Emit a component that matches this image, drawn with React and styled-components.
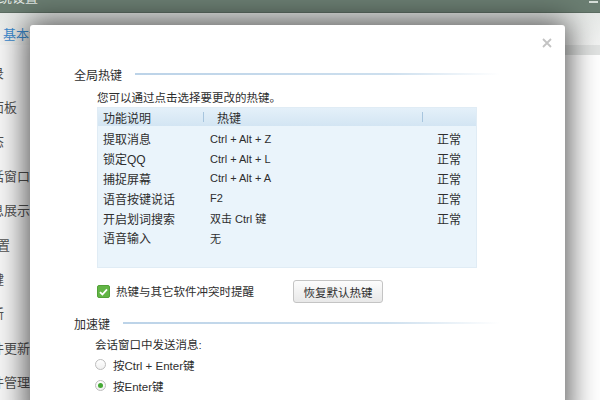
import React from 'react';
import styled, { createGlobalStyle } from 'styled-components';

const FONT = `"Liberation Sans", "Noto Sans CJK SC", sans-serif`;

const GlobalStyle = createGlobalStyle`
  html, body { margin: 0; padding: 0; width: 600px; height: 400px; overflow: hidden; background: #f3f4f3; }
  #root { width: 600px; height: 400px; }
  * { box-sizing: border-box; }
`;

const Screen = styled.div`
  position: relative;
  width: 600px;
  height: 400px;
  overflow: hidden;
  font-family: ${FONT};
  display: flex;
  flex-direction: column;
  background: #f4f5f4;
`;

const TitleBar = styled.div`
  flex: none;
  height: 13px;
  background: #6b7e72;
  border-bottom: 1px solid #5c6d62;
  display: flex;
  justify-content: space-between;
  align-items: flex-start;
  overflow: hidden;
`;

const WindowTitle = styled.span`
  margin-top: -11px;
  margin-left: -14px;
  font-size: 13px;
  line-height: 18px;
  color: #e4ebe6;
  white-space: nowrap;
`;

const MinButton = styled.span`
  width: 9px;
  height: 2px;
  margin: 1px 2px 0 0;
  background: #d6ddd8;
`;

const TabBar = styled.div`
  flex: none;
  height: 32px;
  padding: 12px 0 0 3px;
  background: linear-gradient(#e6e9e7, #f2f3f2);
`;

const Tab = styled.span`
  font-size: 13px;
  line-height: 18px;
  color: #3b8bd0;
`;

const Body = styled.div`
  flex: 1;
  display: flex;
  min-height: 0;
`;

const Sidebar = styled.div`
  flex: none;
  width: 30px;
  overflow: hidden;
  padding-top: 10px;
  background: #f6f6f6;
`;

const SideItem = styled.div`
  height: 34.4px;
  display: flex;
  align-items: center;
  margin-left: ${(p) => p.$offset ?? -22}px;
  font-size: 13px;
  color: #505050;
  white-space: nowrap;
`;

const MainArea = styled.div`
  flex: 1;
  background: #ffffff;
  border-top: 10px solid #e1e3e2;
`;

const Dialog = styled.div`
  position: absolute;
  left: 30px;
  top: 25px;
  width: 535px;
  height: 400px;
  background: #ffffff;
  border-radius: 3px 3px 0 0;
  box-shadow: 0 0 30px 4px rgba(0, 0, 0, 0.66);
`;

const CloseButton = styled.div`
  position: absolute;
  top: 13px;
  right: 13px;
  width: 10px;
  height: 10px;
  display: flex;
`;

const DialogBody = styled.div`
  padding: 40px 65px 0 44px;
  display: flex;
  flex-direction: column;
  color: #2e2e2e;
`;

const SectionHeader = styled.div`
  display: flex;
  align-items: center;
  gap: 13px;
  height: 18px;
  margin-top: ${(p) => p.$top || 0}px;
  font-size: 12px;
  color: #2e2e2e;
`;

const SectionLine = styled.div`
  flex: 1;
  height: 2px;
  margin-top: -1px;
  background: linear-gradient(to right, #bcd3e8, #cddfee 70%, rgba(255, 255, 255, 0));
`;

const SectionBody = styled.div`
  padding-left: ${(p) => p.$indent}px;
  display: flex;
  flex-direction: column;
`;

const Text = styled.div`
  font-size: 11.5px;
  line-height: 18px;
  margin-top: ${(p) => p.$top || 0}px;
  color: #2e2e2e;
  white-space: nowrap;
`;

const Table = styled.div`
  width: 380px;
  height: 161px;
  background: #eaf4fb;
  border: 1px solid #e0ecf5;
  display: flex;
  flex-direction: column;
`;

const COLS = '105px 219px 1fr';

const TableHead = styled.div`
  height: 18px;
  flex: none;
  display: grid;
  grid-template-columns: ${COLS};
  background: linear-gradient(#e4f0f9, #d3e5f3);
  font-size: 12px;
  color: #2e2e2e;
`;

const HeadCell = styled.div`
  display: flex;
  align-items: center;
  padding-left: ${(p) => (p.$divider ? 0 : 5)}px;
  &::before {
    content: '';
    display: ${(p) => (p.$divider ? 'block' : 'none')};
    width: 1px;
    height: 10px;
    margin-right: 13px;
    background: #a7c5de;
  }
`;

const Rows = styled.div`
  padding-top: 3px;
  display: flex;
  flex-direction: column;
`;

const Row = styled.div`
  height: 19.8px;
  display: grid;
  grid-template-columns: ${COLS};
  align-items: center;
  font-size: 12px;
  color: #2e2e2e;
`;

const Cell = styled.div`
  padding-left: ${(p) => p.$pad}px;
  font-size: ${(p) => p.$size || 12}px;
  white-space: nowrap;
`;

const OptionRow = styled.div`
  display: flex;
  align-items: center;
  height: 23px;
  margin-top: 12px;
`;

const CheckGroup = styled.div`
  width: 196px;
  display: flex;
  align-items: center;
  gap: 6px;
`;

const CheckBox = styled.div`
  width: 13px;
  height: 13px;
  border-radius: 2px;
  background: #62b545;
  border: 1px solid #52a238;
  display: flex;
  align-items: center;
  justify-content: center;
`;

const Button = styled.div`
  width: 90px;
  height: 23px;
  border: 1px solid #c4c4c4;
  border-radius: 3px;
  background: linear-gradient(#fcfcfc, #e8e8e8);
  display: flex;
  align-items: center;
  justify-content: center;
  font-size: 11.5px;
  color: #2e2e2e;
`;

const RadioRow = styled.div`
  height: 21px;
  display: flex;
  align-items: center;
  gap: 7px;
  font-size: 11.5px;
  color: #2e2e2e;
`;

const Radio = styled.div`
  width: 11px;
  height: 11px;
  border-radius: 50%;
  border: 1px solid #bdbdbd;
  background: linear-gradient(#ffffff, #f0f0f0);
  display: flex;
  align-items: center;
  justify-content: center;
  &::after {
    content: '';
    display: ${(p) => (p.$checked ? 'block' : 'none')};
    width: 5px;
    height: 5px;
    border-radius: 50%;
    background: #45a935;
  }
`;

const sideItems = [
  { t: '登录' },
  { t: '主面板' },
  { t: '状态' },
  { t: '会话窗口' },
  { t: '消息展示' },
  { t: '安全设置', o: -42 },
  { t: '热键' },
  { t: '更新' },
  { t: '软件更新' },
  { t: '文件管理' },
];

const hotkeys = [
  ['提取消息', 'Ctrl + Alt + Z', '正常'],
  ['锁定QQ', 'Ctrl + Alt + L', '正常'],
  ['捕捉屏幕', 'Ctrl + Alt + A', '正常'],
  ['语音按键说话', 'F2', '正常'],
  ['开启划词搜索', '双击 Ctrl 键', '正常'],
  ['语音输入', '无', ''],
];

export default function App() {
  return (
    <>
      <GlobalStyle />
      <Screen>
        <TitleBar>
          <WindowTitle>系统设置</WindowTitle>
          <MinButton />
        </TitleBar>
        <TabBar>
          <Tab>基本设置</Tab>
        </TabBar>
        <Body>
          <Sidebar>
            {sideItems.map((s) => (
              <SideItem key={s.t} $offset={s.o}>{s.t}</SideItem>
            ))}
          </Sidebar>
          <MainArea />
        </Body>

        <Dialog>
          <CloseButton>
            <svg width="10" height="10" viewBox="0 0 10 10">
              <path d="M1 1 L9 9 M9 1 L1 9" stroke="#c3c3c3" strokeWidth="1.8" />
            </svg>
          </CloseButton>
          <DialogBody>
            <SectionHeader>
              全局热键
              <SectionLine />
            </SectionHeader>
            <SectionBody $indent={23}>
              <Text $top={6}>您可以通过点击选择要更改的热键。</Text>
              <Table>
                <TableHead>
                  <HeadCell>功能说明</HeadCell>
                  <HeadCell $divider>热键</HeadCell>
                  <HeadCell $divider />
                </TableHead>
                <Rows>
                  {hotkeys.map(([name, key, state]) => (
                    <Row key={name}>
                      <Cell $pad={5}>{name}</Cell>
                      <Cell $pad={7} $size={11}>{key}</Cell>
                      <Cell $pad={15}>{state}</Cell>
                    </Row>
                  ))}
                </Rows>
              </Table>
              <OptionRow>
                <CheckGroup>
                  <CheckBox>
                    <svg width="9" height="8" viewBox="0 0 9 8">
                      <path d="M1 4.2 L3.4 6.5 L8 1.3" stroke="#fff" strokeWidth="1.8" fill="none" />
                    </svg>
                  </CheckBox>
                  <Text>热键与其它软件冲突时提醒</Text>
                </CheckGroup>
                <Button>恢复默认热键</Button>
              </OptionRow>
            </SectionBody>

            <SectionHeader $top={11}>
              加速键
              <SectionLine />
            </SectionHeader>
            <SectionBody $indent={21}>
              <Text $top={4}>会话窗口中发送消息:</Text>
              <RadioRow>
                <Radio />
                按Ctrl + Enter键
              </RadioRow>
              <RadioRow>
                <Radio $checked />
                按Enter键
              </RadioRow>
            </SectionBody>
          </DialogBody>
        </Dialog>
      </Screen>
    </>
  );
}
